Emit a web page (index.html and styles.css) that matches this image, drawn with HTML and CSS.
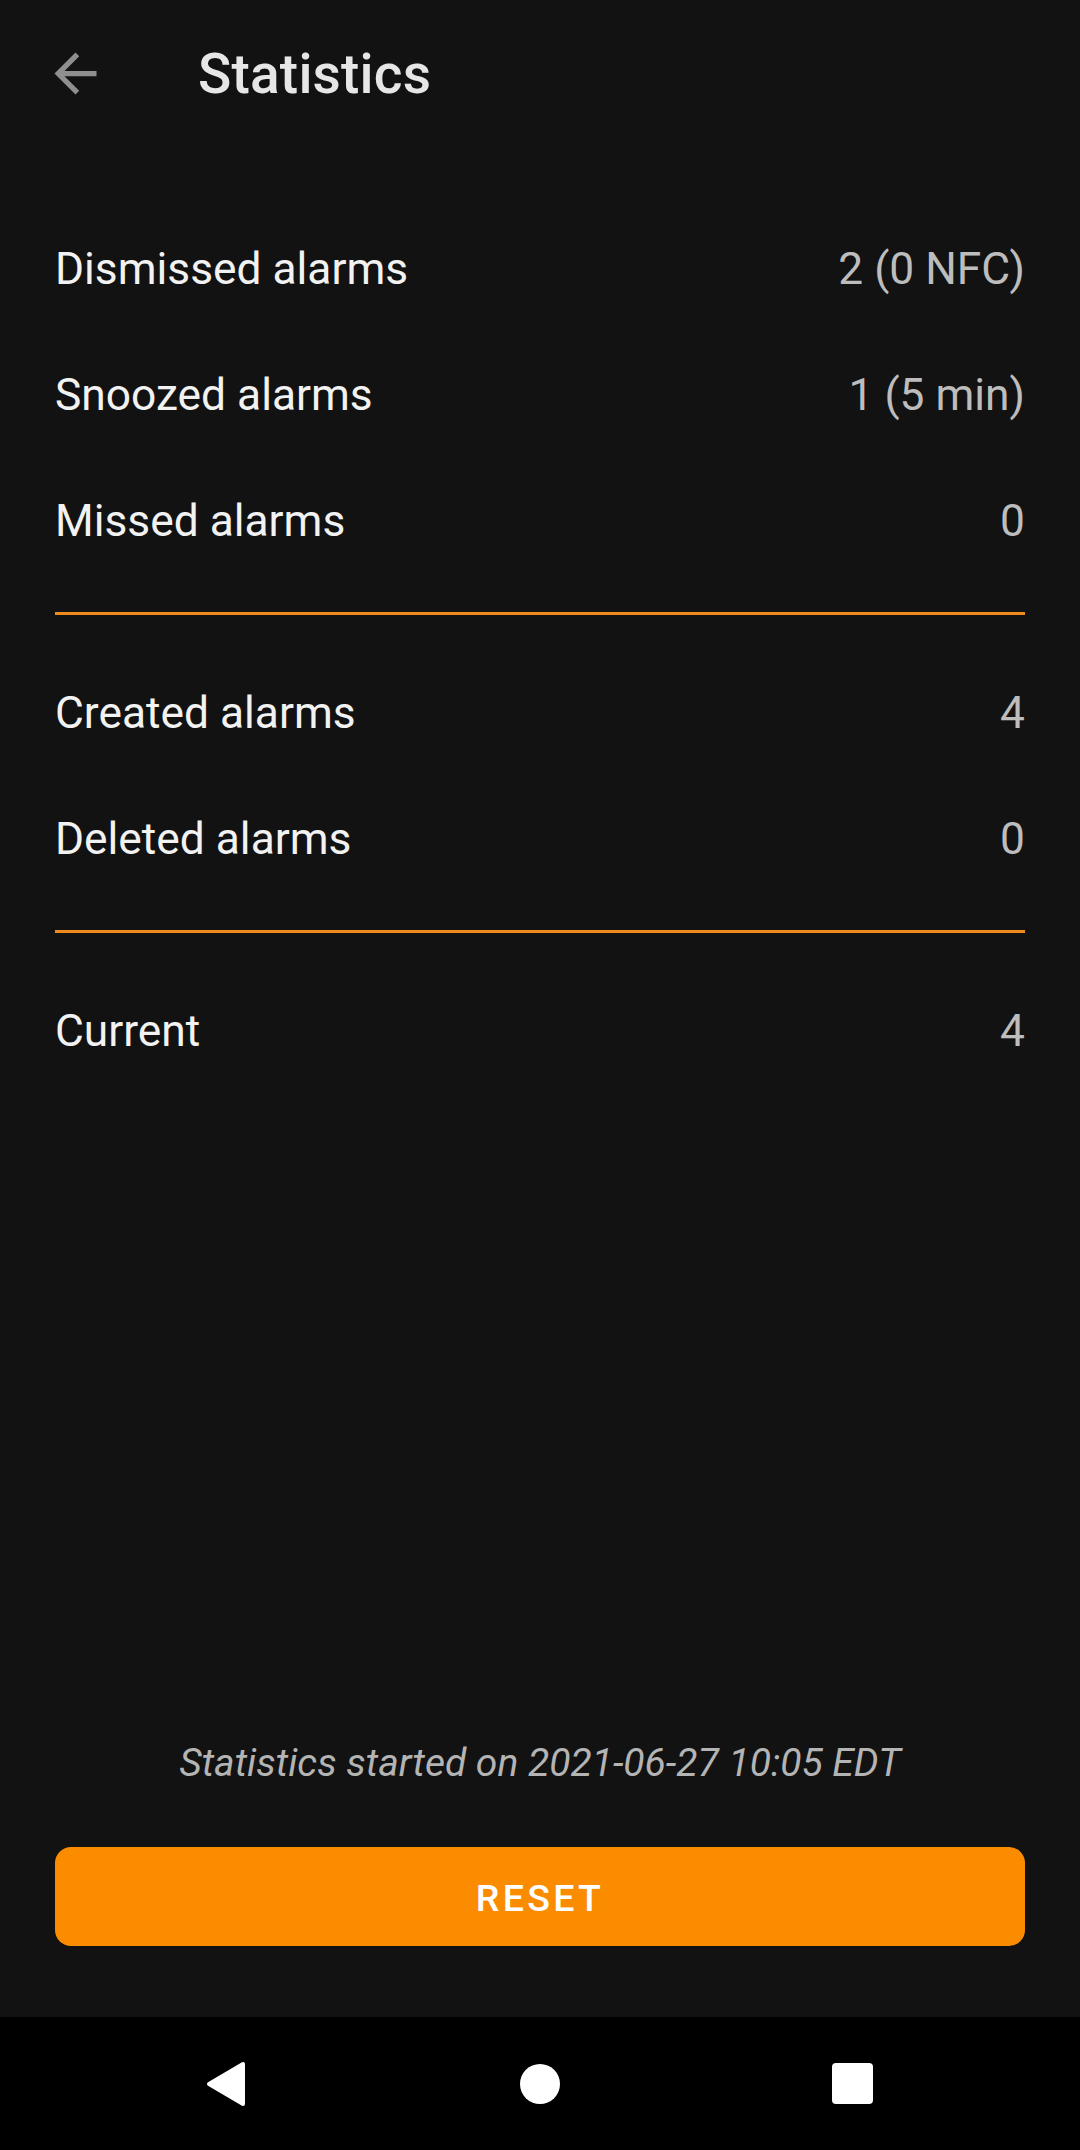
FILE: index.html
```html
<!DOCTYPE html>
<html lang="en">
<head>
<meta charset="utf-8">
<title>Statistics</title>
<link rel="stylesheet" href="styles.css">
</head>
<body>
<div class="screen">
  <header class="toolbar">
    <svg class="back" viewBox="0 0 24 24" width="63" height="63"><path d="M20 11H7.83l5.59-5.59L12 4l-8 8 8 8 1.41-1.41L7.83 13H20v-2z" fill="#8f8f8f"/></svg>
    <h1 class="title">Statistics</h1>
  </header>
  <main class="content">
    <section class="group">
      <div class="row"><span class="label">Dismissed alarms</span><span class="value">2 (0 NFC)</span></div>
      <div class="row"><span class="label">Snoozed alarms</span><span class="value">1 (5 min)</span></div>
      <div class="row"><span class="label">Missed alarms</span><span class="value">0</span></div>
    </section>
    <hr class="divider">
    <section class="group">
      <div class="row"><span class="label">Created alarms</span><span class="value">4</span></div>
      <div class="row"><span class="label">Deleted alarms</span><span class="value">0</span></div>
    </section>
    <hr class="divider">
    <section class="group">
      <div class="row"><span class="label">Current</span><span class="value">4</span></div>
    </section>
  </main>
  <footer class="footer">
    <p class="since">Statistics started on 2021-06-27 10:05 EDT</p>
    <button class="reset">RESET</button>
  </footer>
  <nav class="navbar">
    <svg class="nav-back" viewBox="0 0 46 48" width="46" height="48"><path d="M38 4 L38 44 L4 24 Z" fill="#fff" stroke="#fff" stroke-width="4" stroke-linejoin="round"/></svg>
    <span class="nav-home"></span>
    <span class="nav-recent"></span>
  </nav>
</div>
</body>
</html>
```
FILE: styles.css
```css
* { box-sizing: border-box; }
html, body { margin: 0; padding: 0; background: #121212; }
body { font-family: Roboto, "Noto Sans", "Liberation Sans", sans-serif; }
.screen {
  width: 1080px;
  height: 2150px;
  display: flex;
  flex-direction: column;
  background: #121212;
}
.toolbar {
  height: 147px;
  display: flex;
  align-items: center;
  padding-left: 44px;
}
.back { display: block; flex: none; }
.title {
  margin: 0 0 0 91px;
  font-size: 55px;
  font-weight: 500;
  color: #e6e6e6;
  letter-spacing: 0.2px;
}
.content {
  flex: 1;
  padding: 59px 55px 0;
}
.row {
  height: 126px;
  display: flex;
  align-items: center;
  justify-content: space-between;
  font-size: 44.3px;
}
.label { color: #f2f2f2; }
.value { color: #bdbdbd; }
.divider {
  border: 0;
  height: 3px;
  background: #ef8a1f;
  margin: 28px 0 35px;
}
.footer {
  padding: 0 55px 71px;
  display: flex;
  flex-direction: column;
  align-items: center;
}
.since {
  margin: 0 0 61px;
  font-size: 39px;
  font-style: italic;
  color: #b4b4b4;
}
.reset {
  width: 100%;
  height: 99px;
  padding-top: 3px;
  border: 0;
  border-radius: 16px;
  background: #fb8c00;
  color: #fff;
  font-family: Roboto, "Noto Sans", sans-serif;
  font-size: 37.5px;
  font-weight: 500;
  letter-spacing: 3.3px;
}
.navbar {
  height: 133px;
  background: #000;
  display: grid;
  grid-template-columns: repeat(3, 312px);
  justify-content: center;
  justify-items: center;
  align-items: center;
}
.nav-back { display: block; }
.nav-home {
  width: 40px;
  height: 40px;
  border-radius: 50%;
  background: #fff;
}
.nav-recent {
  width: 41px;
  height: 41px;
  border-radius: 4px;
  background: #fff;
}
```
